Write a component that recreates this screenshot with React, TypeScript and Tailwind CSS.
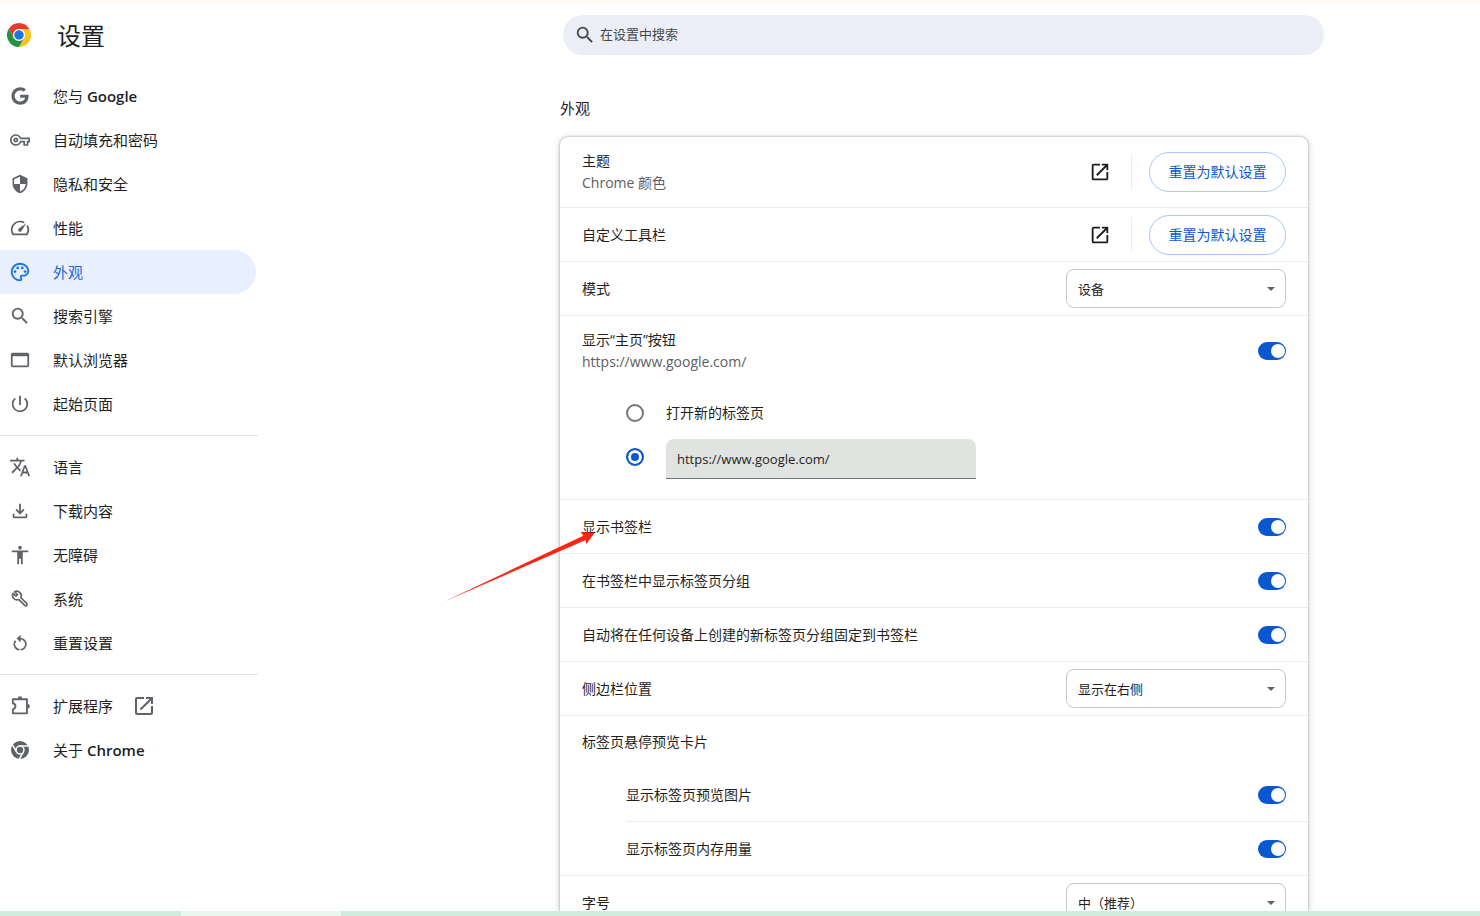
import React, { useState } from "react";
import {
  MdAccessibility, MdOpenInNew, MdOutlinePalette, MdOutlineSpeed,
  MdOutlineVpnKey, MdPowerSettingsNew, MdSearch, MdSecurity, MdTranslate,
} from "react-icons/md";
import { FaGoogle } from "react-icons/fa";

interface NavItem {
  id: string; label: string; latin?: string; icon: React.ReactNode; external?: boolean;
}

const ChromeLogo = () => (
  <svg viewBox="0 0 48 48" className="size-6 shrink-0" aria-hidden="true">
    <circle cx="24" cy="24" r="12" fill="#fff" />
    <path fill="#e33b2e" d="M24,12H44.7812a23.9939,23.9939,0,0,0-41.5639.0029L13.6079,30l.0093-.0024A11.9852,11.9852,0,0,1,24,12Z" />
    <path fill="#fcc31e" d="M34.3913,30.0029,24.0007,48A23.994,23.994,0,0,0,44.78,12.0031H23.9989l-.0025.0093A11.985,11.985,0,0,1,34.3913,30.0029Z" />
    <path fill="#229342" d="M13.6086,30.0031,3.218,12.006A23.994,23.994,0,0,0,24.0025,48L34.3931,30.0029l-.0067-.0068a11.9852,11.9852,0,0,1-20.7778.007Z" />
    <circle cx="24" cy="24" r="9.5" fill="#1a73e8" />
  </svg>
);

const ChromeMonoIcon = () => (
  <svg viewBox="0 0 48 48" width="18" height="18" fill="currentColor">
    <circle cx="24" cy="24" r="24" />
    <circle cx="24" cy="24" r="12.5" fill="#fff" />
    <path fill="none" stroke="#fff" strokeWidth="4" d="M24 13.5H46M14.9 29.2L3.9 10.2M33.1 29.2L22 48.4" />
    <circle cx="24" cy="24" r="8.5" />
  </svg>
);

const BrowserIcon = () => (
  <svg viewBox="0 0 24 24" width="22" height="22" fill="currentColor">
    <path d="M4 4h16a2 2 0 0 1 2 2v12a2 2 0 0 1-2 2H4a2 2 0 0 1-2-2V6a2 2 0 0 1 2-2zm0 4v10h16V8z" />
  </svg>
);

const DownloadIcon = () => (
  <svg viewBox="0 0 24 24" width="22" height="22" fill="currentColor">
    <path d="M18 15v3H6v-3H4v3c0 1.1.9 2 2 2h12c1.1 0 2-.9 2-2v-3h-2zm-1-4l-1.41-1.41L13 12.17V4h-2v8.17L8.41 9.59 7 11l5 5 5-5z" />
  </svg>
);

const WrenchIcon = () => (
  <svg viewBox="0 0 24 24" width="22" height="22" fill="none" stroke="currentColor" strokeWidth="1.8" strokeLinejoin="round">
    <path d="M6.2 4.1L9.2 7.2L7.6 8.8L4.4 5.8A5 5 0 0 0 10.8 12.6L17.4 19.2a1.5 1.5 0 0 0 2.1-2.1L13 10.6A5 5 0 0 0 6.2 4.1Z" />
  </svg>
);

const ResetIcon = () => (
  <svg viewBox="0 0 24 24" width="22" height="22" fill="none" stroke="currentColor" strokeWidth="1.8">
    <path d="M11 7.2h1a6.1 6.1 0 0 1 .6 12.2M11.4 19.4A6.1 6.1 0 0 1 7.2 9.5" />
    <path fill="currentColor" stroke="none" d="M12.6 3v8.4L8.4 7.2z" />
  </svg>
);

const PuzzleIcon = () => (
  <svg viewBox="0 0 24 24" width="22" height="22" fill="none" stroke="currentColor" strokeWidth="2" strokeLinejoin="round">
    <path d="M4.2 4.6H19.6V20H4.2V15.6C8 14.6 8 10 4.2 9Z" />
    <path fill="currentColor" stroke="none" d="M9.4 4a2.6 2.6 0 0 1 5.2 0zM20.2 9.7a2.6 2.6 0 0 1 0 5.2z" />
  </svg>
);

const groups: NavItem[][] = [
  [
    { id: "google", label: "您与", latin: "Google", icon: <FaGoogle size={18} /> },
    { id: "autofill", label: "自动填充和密码", icon: <MdOutlineVpnKey size={20} /> },
    { id: "privacy", label: "隐私和安全", icon: <MdSecurity size={20} /> },
    { id: "performance", label: "性能", icon: <MdOutlineSpeed size={22} /> },
    { id: "appearance", label: "外观", icon: <MdOutlinePalette size={22} /> },
    { id: "search", label: "搜索引擎", icon: <MdSearch size={22} /> },
    { id: "browser", label: "默认浏览器", icon: <BrowserIcon /> },
    { id: "startup", label: "起始页面", icon: <MdPowerSettingsNew size={22} /> },
  ],
  [
    { id: "languages", label: "语言", icon: <MdTranslate size={22} /> },
    { id: "downloads", label: "下载内容", icon: <DownloadIcon /> },
    { id: "a11y", label: "无障碍", icon: <MdAccessibility size={22} /> },
    { id: "system", label: "系统", icon: <WrenchIcon /> },
    { id: "reset", label: "重置设置", icon: <ResetIcon /> },
  ],
  [
    { id: "extensions", label: "扩展程序", icon: <PuzzleIcon />, external: true },
    { id: "about", label: "关于", latin: "Chrome", icon: <ChromeMonoIcon /> },
  ],
];

const Sidebar: React.FC<{ active: string; onSelect: (id: string) => void }> = ({ active, onSelect }) => (
  <nav className="w-[258px] pt-2">
    {groups.map((items, i) => (
      <div key={i} className={i > 0 ? "mt-[9px] border-t border-[#e3e3e3] pt-[9px]" : ""}>
        {items.map((item) => (
          <a
            key={item.id}
            href={`#${item.id}`}
            onClick={() => onSelect(item.id)}
            className={`mr-0.5 flex h-11 items-center rounded-r-full pl-2 text-[15px] leading-[22px] ${active === item.id ? "bg-[#e8f0fe] text-[#1967d2]" : "text-[#1f1f1f]"}`}
          >
            <span className={`mr-[21px] flex w-6 shrink-0 justify-center ${active === item.id ? "text-[#1a73e8]" : "text-[#5f6368]"}`}>{item.icon}</span>
            <span>
              {item.label}
              {item.latin && <span className="font-semibold"> {item.latin}</span>}
            </span>
            {item.external && <MdOpenInNew size={24} className="ml-[19px] text-[#5f6368]" />}
          </a>
        ))}
      </div>
    ))}
  </nav>
);

const Toggle: React.FC<{ id: string }> = ({ id }) => {
  const [on, setOn] = useState(true);
  return (
    <input
      id={id}
      type="checkbox"
      role="switch"
      checked={on}
      onChange={(e) => setOn(e.target.checked)}
      className="flex h-[18px] w-7 shrink-0 appearance-none items-center rounded-full bg-[#c7c7c7] px-px before:size-3.5 before:rounded-full before:bg-white checked:justify-end checked:bg-[#0b57d0]"
    />
  );
};

const Select: React.FC<{ id: string; options: string[] }> = ({ id, options }) => (
  <div className="relative w-[220px] shrink-0">
    <select id={id} className="block h-[39px] w-full appearance-none rounded-lg border border-[#c7c7c7] bg-white pt-0.5 pl-[11px] text-[13px] text-[#1f1f1f]">
      {options.map((o) => <option key={o}>{o}</option>)}
    </select>
    <svg viewBox="0 0 8 4" className="pointer-events-none absolute top-[18px] right-[11px] h-1 w-2 fill-[#5f6368]">
      <path d="M0 0h8L4 4z" />
    </svg>
  </div>
);

// Plain row: label on the left, control on the right
const Row: React.FC<{ id: string; label: string; children: React.ReactNode }> = ({ id, label, children }) => (
  <div className="relative box-content flex h-[53px] items-center justify-between px-[22px]">
    <label htmlFor={id}>{label}</label>
    {children}
  </div>
);

const ResetActions: React.FC<{ name: string }> = ({ name }) => (
  <div className="flex shrink-0 items-center">
    <button aria-label={name} className="text-[#1f1f1f]"><MdOpenInNew size={22} /></button>
    <div className="mr-[17px] ml-5 h-[35px] w-px bg-[#ededed]" />
    <button className="h-10 w-[137px] rounded-full border border-[#a8c7fa] text-sm text-[#0b57d0]">重置为默认设置</button>
  </div>
);

const HomeButtonSection = () => {
  const [choice, setChoice] = useState("url");
  const [url, setUrl] = useState("https://www.google.com/");
  const radio = "size-[18px] shrink-0 appearance-none rounded-full border-2 border-[#747775] checked:border-[#0b57d0] checked:bg-[#0b57d0] checked:shadow-[inset_0_0_0_3px_#fff]";

  return (
    <div className="px-[22px] pb-5">
      <div className="flex h-[70px] items-center justify-between">
        <label htmlFor="home" className="leading-[22px]">
          显示“主页”按钮
          <span className="block text-[#5e5e5e]">https://www.google.com/</span>
        </label>
        <Toggle id="home" />
      </div>
      <div className="pt-[5px] pl-11">
        <div className="flex h-11 items-center gap-[22px]">
          <input id="home-ntp" type="radio" name="home" checked={choice === "ntp"} onChange={() => setChoice("ntp")} className={radio} />
          <label htmlFor="home-ntp">打开新的标签页</label>
        </div>
        <div className="flex h-11 items-center gap-[22px]">
          <input aria-label="自定义网址" type="radio" name="home" checked={choice === "url"} onChange={() => setChoice("url")} className={radio} />
          <input
            aria-label="网址"
            type="text"
            value={url}
            onChange={(e) => setUrl(e.target.value)}
            className="h-10 w-[310px] self-end rounded-t-lg border-b border-[#747775] bg-[#e1e3e1] px-[11px] text-[13px] text-[#1f1f1f] outline-none"
          />
        </div>
      </div>
    </div>
  );
};

const RedArrow = () => (
  <svg viewBox="0 0 152 72" className="pointer-events-none absolute top-8 -left-[116px] z-10 h-[72px] w-[152px]" aria-hidden="true">
    <path fill="#ff2412" d="M0.3 69.5L139.3 3.7L136.7 0L150.7 0.7L142.3 12L141.7 7.9Z" />
  </svg>
);

const App = () => {
  const [active, setActive] = useState("appearance");

  return (
    <div className="flex h-screen flex-col overflow-hidden bg-white font-['Open_Sans','Noto_Sans_CJK_SC',sans-serif] text-[#1f1f1f]">
      <div className="h-1 shrink-0 bg-[#fff8f5]" />
      <div className="min-h-0 flex-1 overflow-hidden">
        <header className="flex h-[62px] items-center">
          <div className="flex w-[563px] shrink-0 items-center gap-[26px] pl-[7px]">
            <ChromeLogo />
            <h1 className="pt-0.5 text-2xl">设置</h1>
          </div>
          <label className="flex h-10 max-w-[761px] flex-1 items-center gap-1 rounded-full bg-[#ebeef7] pl-[11px] text-[#474747]">
            <MdSearch size={22} />
            <input type="search" placeholder="在设置中搜索" className="flex-1 bg-transparent text-[13px] outline-none placeholder:text-[#474747]" />
          </label>
        </header>

        <div className="flex items-start">
          <div className="w-[560px] shrink-0">
            <Sidebar active={active} onSelect={setActive} />
          </div>

          <main className="max-w-[748px] flex-1 pt-[30px] text-sm">
            <h2 className="mb-[17px] text-[15px] leading-6">外观</h2>
            <div className="divide-y divide-[#ededed] rounded-lg bg-white shadow-[0_0_2px_rgba(60,64,67,0.5),0_1px_6px_1px_rgba(60,64,67,0.2)]">
              <div className="flex h-[71px] items-center justify-between px-[22px]">
                <div className="leading-[22px]">
                  <div>主题</div>
                  <div className="text-[#5e5e5e]">Chrome 颜色</div>
                </div>
                <ResetActions name="主题" />
              </div>
              <div className="flex h-[54px] items-center justify-between px-[22px]">
                <div>自定义工具栏</div>
                <ResetActions name="自定义工具栏" />
              </div>
              <Row id="mode" label="模式"><Select id="mode" options={["设备", "浅色", "深色"]} /></Row>

              <HomeButtonSection />

              <Row id="bookmarks" label="显示书签栏">
                <Toggle id="bookmarks" />
                <RedArrow />
              </Row>
              <Row id="groups" label="在书签栏中显示标签页分组"><Toggle id="groups" /></Row>
              <Row id="pin" label="自动将在任何设备上创建的新标签页分组固定到书签栏"><Toggle id="pin" /></Row>
              <Row id="side" label="侧边栏位置"><Select id="side" options={["显示在右侧", "显示在左侧"]} /></Row>

              {/* Tab hover cards */}
              <div>
                <div className="flex h-[52px] items-center px-[22px]">标签页悬停预览卡片</div>
                <div className="ml-[66px] divide-y divide-[#ededed] [&>div]:pl-0">
                  <Row id="preview" label="显示标签页预览图片"><Toggle id="preview" /></Row>
                  <Row id="memory" label="显示标签页内存用量"><Toggle id="memory" /></Row>
                </div>
              </div>

              <Row id="font" label="字号"><Select id="font" options={["中（推荐）", "小", "大"]} /></Row>
            </div>
          </main>
        </div>
      </div>

      {/* Strip along the window's lower edge */}
      <div className="flex h-[5px] shrink-0 bg-[#d1ebdc]">
        <div className="ml-[181px] w-40 bg-[#eaf6f0]" />
      </div>
    </div>
  );
};

export default App;
